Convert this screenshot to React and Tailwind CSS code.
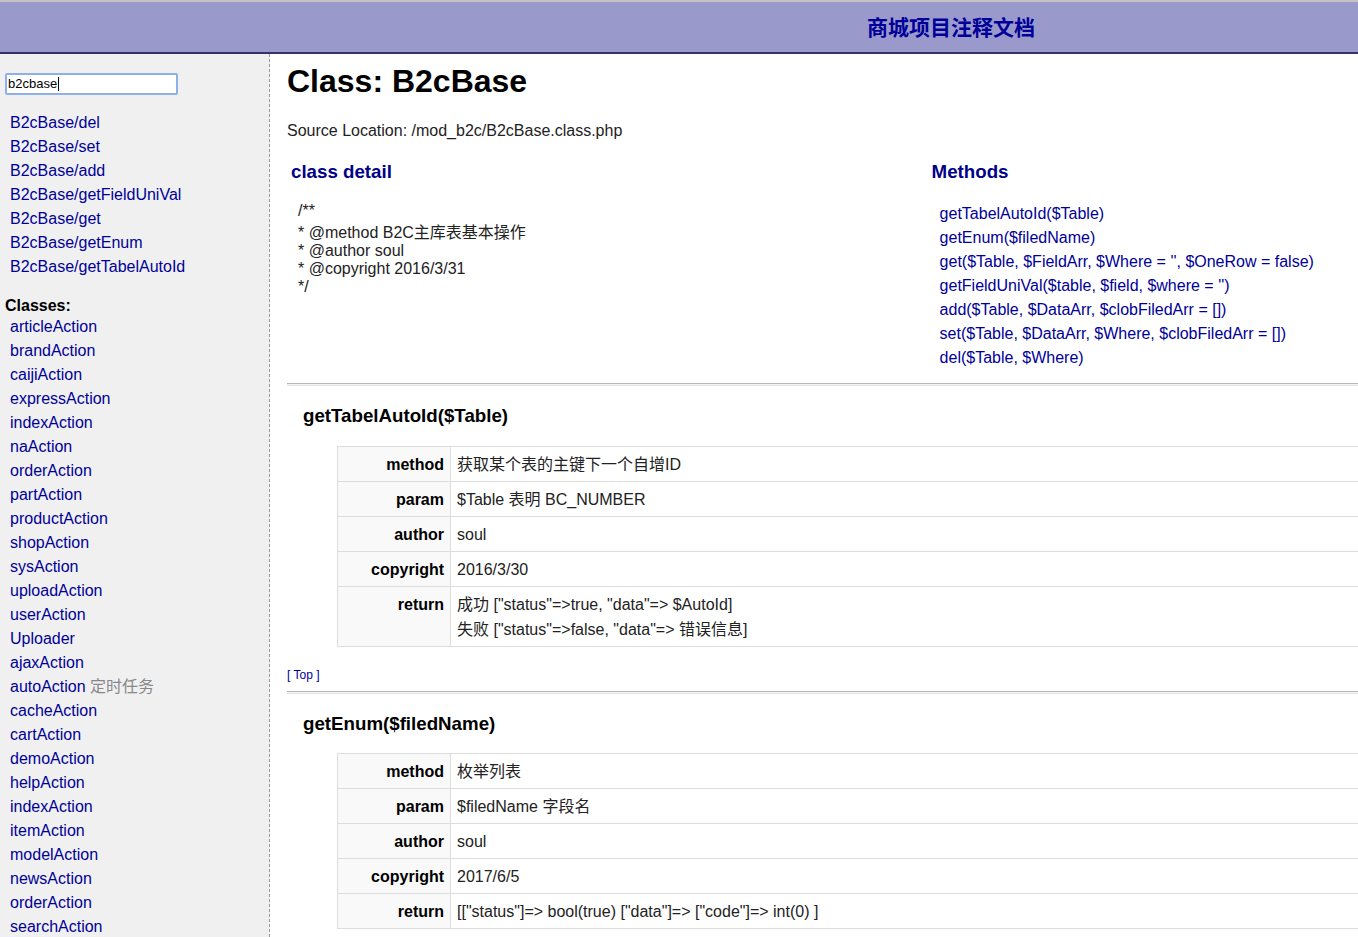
import React from "react";

const FONT = { fontFamily: '"Liberation Sans", Arial, "Noto Sans CJK SC", sans-serif' };

const MEMBERS = [
  "B2cBase/del",
  "B2cBase/set",
  "B2cBase/add",
  "B2cBase/getFieldUniVal",
  "B2cBase/get",
  "B2cBase/getEnum",
  "B2cBase/getTabelAutoId",
];

const CLASSES = [
  ["articleAction"], ["brandAction"], ["caijiAction"], ["expressAction"],
  ["indexAction"], ["naAction"], ["orderAction"], ["partAction"],
  ["productAction"], ["shopAction"], ["sysAction"], ["uploadAction"],
  ["userAction"], ["Uploader"], ["ajaxAction"], ["autoAction", "定时任务"],
  ["cacheAction"], ["cartAction"], ["demoAction"], ["helpAction"],
  ["indexAction"], ["itemAction"], ["modelAction"], ["newsAction"],
  ["orderAction"], ["searchAction"],
];

const METHODS = [
  "getTabelAutoId($Table)",
  "getEnum($filedName)",
  "get($Table, $FieldArr, $Where = '', $OneRow = false)",
  "getFieldUniVal($table, $field, $where = '')",
  "add($Table, $DataArr, $clobFiledArr = [])",
  "set($Table, $DataArr, $Where, $clobFiledArr = [])",
  "del($Table, $Where)",
];

const COMMENT = ["/**", "* @method B2C主库表基本操作", "* @author soul", "* @copyright 2016/3/31", "*/"];

const DOCS = [
  {
    name: "getTabelAutoId($Table)",
    rows: [
      ["method", ["获取某个表的主键下一个自增ID"]],
      ["param", ["$Table 表明 BC_NUMBER"]],
      ["author", ["soul"]],
      ["copyright", ["2016/3/30"]],
      ["return", ['成功 ["status"=>true, "data"=> $AutoId]', '失败 ["status"=>false, "data"=> 错误信息]']],
    ],
  },
  {
    name: "getEnum($filedName)",
    rows: [
      ["method", ["枚举列表"]],
      ["param", ["$filedName 字段名"]],
      ["author", ["soul"]],
      ["copyright", ["2017/6/5"]],
      ["return", ['[["status"]=> bool(true) ["data"]=> ["code"]=> int(0) ]']],
    ],
  },
];

const Rule = () => (
  <div className="border-t border-t-[#b8b8b8] border-b border-b-[#e4e4e4] h-[3px] bg-[#f4f4f4]" />
);

const DocTable = ({ rows }) => (
  <table className="ml-[50px] w-[1040px] border-collapse text-[16px] text-[#222]">
    <tbody>
      {rows.map(([label, lines]) => (
        <tr key={label}>
          <td className="w-[113px] border border-[#dddddd] bg-[#f9f9f9] pr-[6px] pt-[7px] pb-[6px] text-right align-top font-bold leading-[21px] text-black">
            {label}
          </td>
          <td className="border border-[#dddddd] pl-[6px] pt-[7px] pb-[6px] align-top leading-[21px]">
            {lines.map((l, i) => (
              <div key={i} className={i > 0 ? "mt-[4px] h-[21px]" : "h-[21px]"}>{l}</div>
            ))}
          </td>
        </tr>
      ))}
    </tbody>
  </table>
);

export default function App() {
  return (
    <div className="h-[937px] overflow-hidden bg-white text-[#222]" style={FONT}>
      {/* header */}
      <div className="flex h-[54px] border-t-2 border-t-[#c4c4c4] border-b-2 border-b-[#333366] bg-[#9999cc]">
        <div className="w-[544px]" />
        <div className="flex-1 pt-[2px] text-center text-[21px] font-bold leading-[48px] text-[#000099]">
          商城项目注释文档
        </div>
      </div>

      <div className="flex">
        {/* sidebar */}
        <div className="h-[883px] w-[270px] shrink-0 border-r border-dashed border-r-[#999] bg-[#f0f0f0] pl-[5px] pt-[19px]">
          <div className="flex h-[22px] w-[173px] items-center rounded-[2px] border-2 border-[#8eb0e8] bg-white pl-[1px] text-[13px] text-black">
            b2cbase
            <span className="ml-[1px] inline-block h-[14px] w-[1px] bg-black" />
          </div>
          <div className="mt-[16px] pl-[5px] text-[16px] leading-[24px] text-[#000099]">
            {MEMBERS.map((m) => (
              <div key={m}>{m}</div>
            ))}
          </div>
          <div className="mt-[17px] text-[16px] font-bold leading-[19px] text-black">Classes:</div>
          <div className="pl-[5px] text-[16px] leading-[24px] text-[#000099]">
            {CLASSES.map(([c, note], i) => (
              <div key={i}>
                {c}
                {note && <span className="text-[#888]"> {note}</span>}
              </div>
            ))}
          </div>
        </div>

        {/* main */}
        <div className="min-w-0 flex-1 overflow-hidden pl-[17px]">
          <h1 className="mt-[9px] text-[32px] font-bold leading-[37px] text-black">Class: B2cBase</h1>
          <p className="mt-[20px] text-[16px] leading-[22px]">Source Location: /mod_b2c/B2cBase.class.php</p>

          <div className="mt-[18px] flex">
            <div className="w-[60%]">
              <h3 className="pl-[4px] text-[18.72px] font-bold leading-[24px] text-[#000088]">class detail</h3>
              <div className="mt-[18px] pl-[11px] text-[16px]">
                {COMMENT.map((l, i) => (
                  <div key={i} className={i === 1 ? "mt-[4px] h-[18px] leading-[18px]" : "h-[18px] leading-[18px]"}>
                    {l}
                  </div>
                ))}
              </div>
            </div>
            <div className="flex-1 pl-[2px]">
              <h3 className="text-[18.72px] font-bold leading-[24px] text-[#000088]">Methods</h3>
              <div className="mt-[18px] pl-[8px] text-[16px] leading-[24px] text-[#000099]">
                {METHODS.map((m) => (
                  <div key={m}>{m}</div>
                ))}
              </div>
            </div>
          </div>

          <div className="mt-[13px]">
            <Rule />
          </div>

          {DOCS.map((d, i) => (
            <div key={d.name}>
              <h3 className="mt-[18px] pl-[16px] text-[18.72px] font-bold leading-[24px] text-black">{d.name}</h3>
              <div className={i === 0 ? "mt-[18px]" : "mt-[17px]"}>
                <DocTable rows={d.rows} />
              </div>
              {i === 0 && (
                <>
                  <div className="mt-[21px] text-[12px] leading-[14px] text-[#000099]">[ Top ]</div>
                  <div className="mt-[9px]">
                    <Rule />
                  </div>
                </>
              )}
            </div>
          ))}
        </div>
      </div>
    </div>
  );
}
